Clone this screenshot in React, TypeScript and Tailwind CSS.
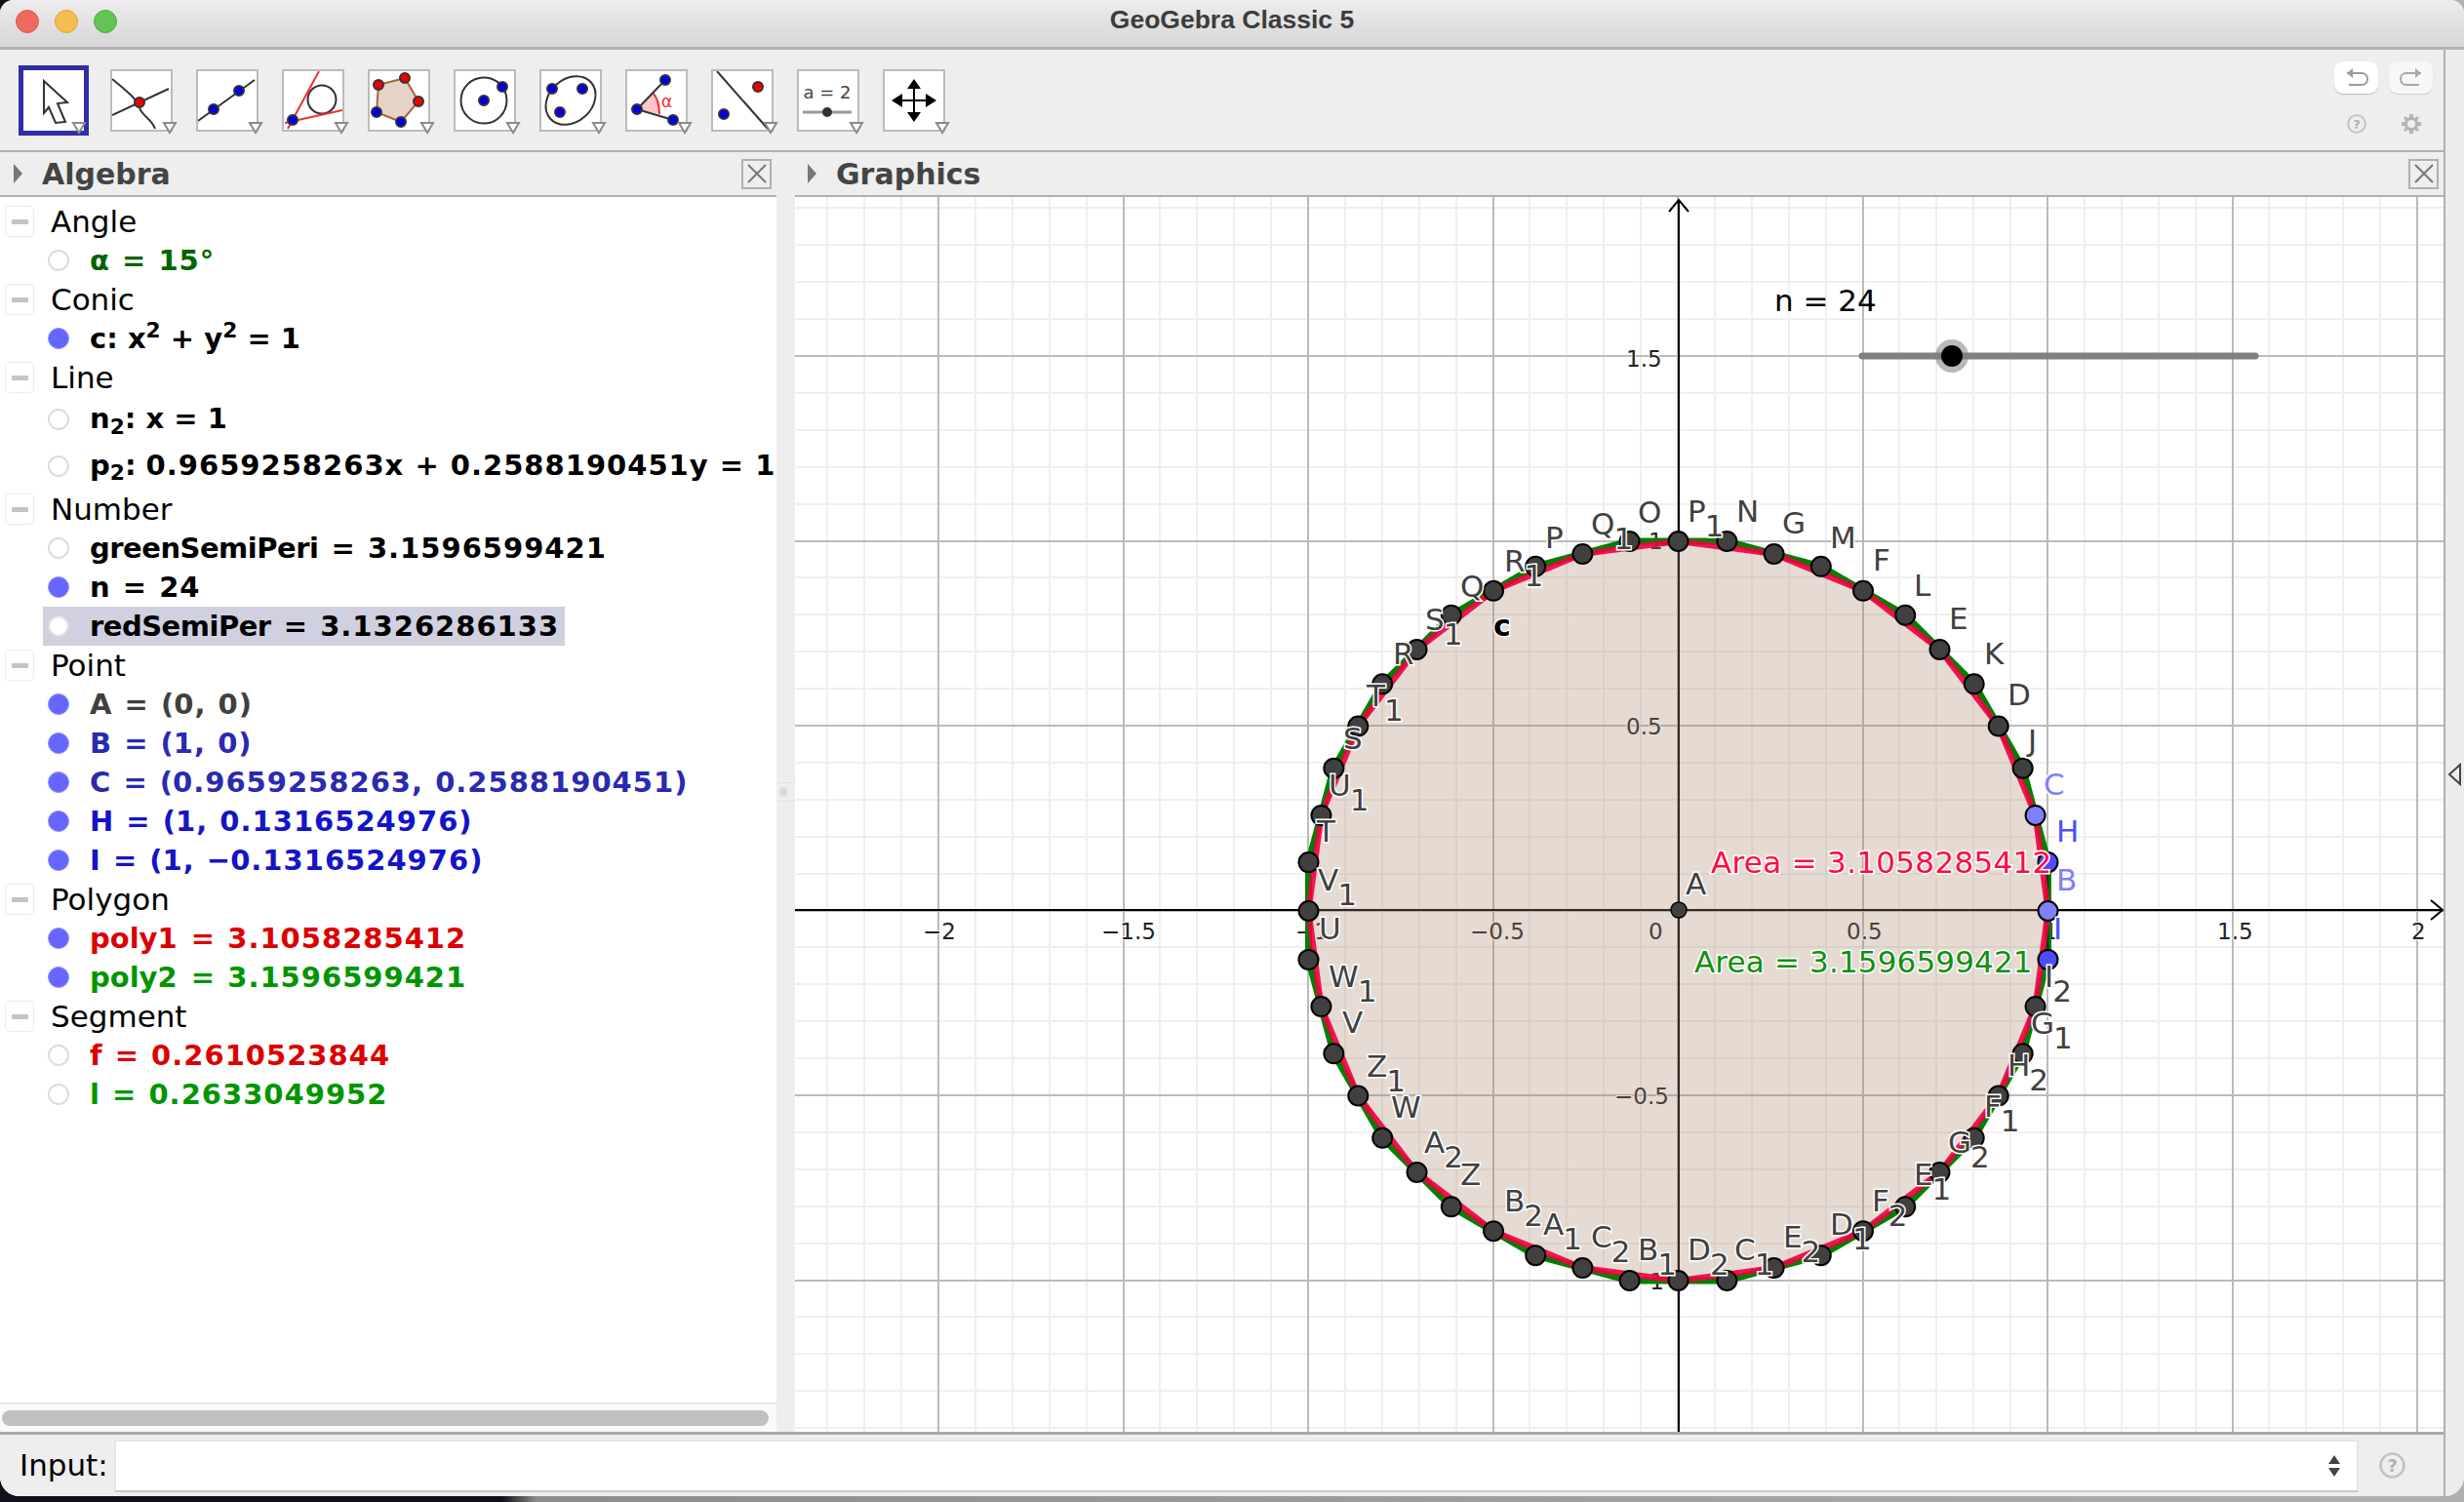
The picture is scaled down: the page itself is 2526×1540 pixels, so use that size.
import React from 'react';

const SANS = '"DejaVu Sans", sans-serif';
const OX = 1720.5;
const OY = 934;
const UNIT = 379;

const px = (x: number) => OX + x * UNIT;
const py = (y: number) => OY - y * UNIT;

const Dot = ({ x, y, c, r = 5 }: { x: number; y: number; c: string; r?: number }) => (
  <circle cx={x} cy={y} r={r} fill={c} stroke="#333" strokeWidth={2} />
);

const BLUE = '#0000e0';
const RED = '#f00000';

const icons: React.ReactNode[] = [
  <g fill="none" stroke="#333" strokeWidth={2}>
    <path d="M2 10 C16 22 28 30 31 42 C36 50 43 52 46 61" />
    <path d="M2 47 L60 20" />
    <Dot x={30} y={34} c={RED} />
  </g>,
  <g fill="none" stroke="#333" strokeWidth={2}>
    <path d="M2 53 L60 11" />
    <Dot x={18} y={41} c={BLUE} />
    <Dot x={44} y={22} c={BLUE} />
  </g>,
  <g fill="none" strokeWidth={2}>
    <circle cx={41} cy={31} r={14.5} stroke="#333" />
    <path d="M38 2 L6 61" stroke="#f03030" />
    <path d="M3 55 L62 42" stroke="#f03030" />
    <Dot x={11} y={52} c={BLUE} />
  </g>,
  <g strokeWidth={2}>
    <path d="M38 9 L11 16 L9 44 L34 54 L52 33 Z" fill="#e6d3c8" stroke="#a8643c" />
    <Dot x={38} y={9} c={RED} />
    <Dot x={11} y={16} c={RED} />
    <Dot x={52} y={33} c={RED} />
    <Dot x={9} y={44} c={BLUE} />
    <Dot x={34} y={54} c={BLUE} />
  </g>,
  <g fill="none" strokeWidth={2}>
    <circle cx={31} cy={32} r={23.5} stroke="#333" />
    <Dot x={31} y={32} c={BLUE} />
    <Dot x={50} y={18} c={BLUE} />
  </g>,
  <g fill="none" strokeWidth={2}>
    <ellipse cx={32} cy={32} rx={28} ry={22} transform="rotate(-42 32 32)" stroke="#333" />
    <Dot x={13} y={20} c={BLUE} />
    <Dot x={44} y={20} c={BLUE} />
    <Dot x={21} y={44} c={BLUE} />
  </g>,
  <g fill="none" strokeWidth={2}>
    <path d="M12 41 L28 24 C33 29 35 36 35 46 Z" fill="#ffc4c4" stroke="none" />
    <path d="M28 24 C33 29 35 36 35 46" stroke="#f03030" />
    <path d="M41 11 L12 41 L49 52" stroke="#333" />
    <Dot x={41} y={11} c={BLUE} />
    <Dot x={12} y={41} c={BLUE} />
    <Dot x={49} y={52} c={BLUE} />
    <text x={37} y={39} fontSize={17} fill="#f03030" stroke="none" fontFamily={SANS}>
      α
    </text>
  </g>,
  <g fill="none" strokeWidth={2}>
    <path d="M6 2 L58 61" stroke="#333" />
    <Dot x={48} y={18} c={RED} />
    <Dot x={13} y={46} c={BLUE} />
  </g>,
  <g>
    <text x={31} y={30} fontSize={18} textAnchor="middle" fill="#444" fontFamily={SANS}>
      a = 2
    </text>
    <path d="M6 44 H56" stroke="#999" strokeWidth={3} />
    <circle cx={31} cy={44} r={5} fill="#333" />
  </g>,
  <g fill="#000">
    <path d="M32 20 V44 M20 32 H44" stroke="#000" strokeWidth={2} />
    <path d="M32 10 L39 20 H25 Z M32 54 L39 44 H25 Z M9 32 L20 25 V39 Z M55 32 L44 25 V39 Z" />
  </g>,
];

const Caret = () => (
  <svg width={16} height={14} className="absolute right-[-7px] bottom-[-5px]">
    <path d="M2 2 H14 L8 12 Z" fill="#fff" stroke="#8a8a8a" strokeWidth={2} />
  </svg>
);

function Help({ size }: { size: number }) {
  return (
    <svg width={size} height={size} viewBox="0 0 26 26">
      <circle cx={13} cy={13} r={11.5} fill="none" stroke="#c2c2c2" strokeWidth={2.5} />
      <text x={13} y={19} textAnchor="middle" fontSize={17} fontWeight={700} fill="#b0b0b0" fontFamily={SANS}>
        ?
      </text>
    </svg>
  );
}

const Toolbar = () => (
  <div className="flex h-[105px] items-center pt-[1px] pl-[19px] pr-[11px] bg-[#eeeeee] border-b-[2px] border-[#b0b0b0]">
    <div className="relative w-[72px] h-[72px] border-[5px] border-[#2e2ea6] bg-white">
      <svg width={62} height={62} viewBox="5 5 62 62">
        <path
          d="M26 16 L50 38 L40 39 L48 58 L38 59 L31 43 L26 49 Z"
          fill="#fff"
          stroke="#333"
          strokeWidth={2}
        />
      </svg>
      <svg width={16} height={14} className="absolute right-[-3px] bottom-[-4px]">
        <path d="M2 2 H14 L8 12 Z" fill="#fff" stroke="#8a8a8a" strokeWidth={2} />
      </svg>
    </div>
    <div className="flex gap-[24px] ml-[22px]">
      {icons.map((icon, i) => (
        <div key={i} className="relative w-[64px] h-[64px] border-[2px] border-[#bbbbbb] bg-white">
          <svg width={60} height={60} viewBox="2 2 60 60">
            {icon}
          </svg>
          <Caret />
        </div>
      ))}
    </div>
    <div className="ml-auto flex flex-col gap-[21px] self-start mt-[11px]">
      <div className="flex gap-[11px]">
        <div className="w-[45px] h-[33px] rounded-[9px] bg-white shadow-[0_1px_1px_#bbb] flex items-center justify-center">
          <svg width={26} height={26} viewBox="0 0 26 26" fill="none" stroke="#9a9a9a" strokeWidth={2}>
            <path d="M3 8 H18 C26 8 26 20 18 20 H5" />
            <path d="M9 3 L3 8 L9 13" fill="#9a9a9a" stroke="none" />
          </svg>
        </div>
        <div className="w-[45px] h-[33px] rounded-[9px] bg-[#f7f7f7] shadow-[0_1px_1px_#ccc] flex items-center justify-center">
          <svg width={26} height={26} viewBox="0 0 26 26" fill="none" stroke="#a8a8a8" strokeWidth={2}>
            <path d="M23 8 H8 C0 8 0 20 8 20 H21" />
            <path d="M17 3 L23 8 L17 13" fill="#a8a8a8" stroke="none" />
          </svg>
        </div>
      </div>
      <div className="flex gap-[36px] pl-[13px]">
        <Help size={20} />
        <svg width={20} height={20} viewBox="0 0 20 20">
          <path
            d="M8 0 H12 V3 L14 4 L16 2 L18 4 L16 6 L17 8 H20 V12 H17 L16 14 L18 16 L16 18 L14 16 L12 17 V20 H8 V17 L6 16 L4 18 L2 16 L4 14 L3 12 H0 V8 H3 L4 6 L2 4 L4 2 L6 4 L8 3 Z"
            fill="#b4b4b4"
          />
          <circle cx={10} cy={10} r={4} fill="#eee" />
        </svg>
      </div>
    </div>
  </div>
);

const PanelHeader = ({ title }: { title: string }) => (
  <div className="flex items-center h-[46px] bg-[#eeeeee] border-b-[2px] border-[#b0b0b0]">
    <svg width={12} height={20} className={title === 'Algebra' ? 'ml-[13px]' : 'ml-[12px]'}>
      <path d="M1 0 L10 10 L1 20 Z" fill="#777" />
    </svg>
    <span className="ml-[18px] text-[30px] font-bold text-[#444] [font-family:'DejaVu_Sans',sans-serif]">
      {title}
    </span>
    <div className="ml-auto mr-[5px] w-[31px] h-[31px] border-[2px] border-[#b0b0b0] flex items-center justify-center">
      <svg width={22} height={22} viewBox="0 0 22 22">
        <path d="M2 2 L20 20 M20 2 L2 20" stroke="#777" strokeWidth={2} />
      </svg>
    </div>
  </div>
);

const Group = ({ label }: { label: string }) => (
  <div className="flex items-center h-[40px]">
    <div className="ml-[5px] w-[30px] h-[32px] rounded-[4px] border-[1.5px] border-[#ececec] flex items-center justify-center">
      <div className="w-[17px] h-[5px] bg-[#c4c4c4]" />
    </div>
    <span className="ml-[17px] text-[31px] text-black">{label}</span>
  </div>
);

// digits run wider and long words narrower than in the bold face we have
const fmt = (s: string) =>
  s.split(/(\d[\d.]*|[A-Za-z]{5,})/).map((part, i) => {
    if (/^\d/.test(part)) {
      return (
        <span key={i} className="tracking-[1px]">
          {part}
        </span>
      );
    }
    if (/^[A-Za-z]{5,}$/.test(part)) {
      return (
        <span key={i} className="tracking-[-0.5px]">
          {part}
        </span>
      );
    }
    return part;
  });

const Item = ({
  on,
  color,
  hi,
  h,
  children,
}: {
  on?: boolean;
  color: string;
  hi?: boolean;
  h?: string;
  children: React.ReactNode;
}) => (
  <div className={`flex items-center ${h || 'h-[40px]'} ml-[44px]`}>
    <div className={`flex items-center h-[40px] pr-[6px] ${hi ? 'bg-[#d0d0e0]' : ''}`}>
      <div
        className={`ml-[5px] w-[22px] h-[22px] rounded-full ${
          on ? 'bg-[#6666ff] border-[1px] border-[#8f8fff]' : 'bg-white border-[2px] border-[#dddddd]'
        }`}
      />
      <span className={`ml-[21px] text-[29px] font-bold whitespace-nowrap ${h ? '' : 'pt-[1px]'} ${color}`}>
        {children}
      </span>
    </div>
  </div>
);

const Wide = ({ children }: { children: React.ReactNode }) => (
  <span className="[word-spacing:3px]">{children}</span>
);

const Algebra = () => (
  <div className="flex-1 min-h-0 bg-white pt-[5px] overflow-hidden [font-family:'DejaVu_Sans',sans-serif]">
    <Group label="Angle" />
    <Item color="text-[#006400]">
      <Wide>{fmt('α = 15°')}</Wide>
    </Item>
    <Group label="Conic" />
    <Item on color="text-black">
      c: x<sup>2</sup> + y<sup>2</sup> = 1
    </Item>
    <Group label="Line" />
    <Item color="text-black" h="h-[46px]">
      n<sub>2</sub>: x = 1
    </Item>
    <Item color="text-black" h="h-[49px]">
      p<sub>2</sub>: <span className="[word-spacing:2px]">{fmt('0.9659258263x + 0.2588190451y = 1')}</span>
    </Item>
    <Group label="Number" />
    <Item color="text-black">
      <Wide>{fmt('greenSemiPeri = 3.1596599421')}</Wide>
    </Item>
    <Item on color="text-black">
      <Wide>{fmt('n = 24')}</Wide>
    </Item>
    <Item hi color="text-black">
      <Wide>{fmt('redSemiPer = 3.1326286133')}</Wide>
    </Item>
    <Group label="Point" />
    <Item on color="text-[#404040]">
      <Wide>{fmt('A = (0, 0)')}</Wide>
    </Item>
    <Item on color="text-[#2a2ab0]">
      <Wide>{fmt('B = (1, 0)')}</Wide>
    </Item>
    <Item on color="text-[#2a2ab0]">
      <Wide>{fmt('C = (0.9659258263, 0.2588190451)')}</Wide>
    </Item>
    <Item on color="text-[#1414c8]">
      <Wide>{fmt('H = (1, 0.1316524976)')}</Wide>
    </Item>
    <Item on color="text-[#1414c8]">
      <Wide>{fmt('I = (1, −0.1316524976)')}</Wide>
    </Item>
    <Group label="Polygon" />
    <Item on color="text-[#dc0000]">
      <Wide>{fmt('poly1 = 3.1058285412')}</Wide>
    </Item>
    <Item on color="text-[#009600]">
      <Wide>{fmt('poly2 = 3.1596599421')}</Wide>
    </Item>
    <Group label="Segment" />
    <Item color="text-[#dc0000]">
      <Wide>{fmt('f = 0.2610523844')}</Wide>
    </Item>
    <Item color="text-[#009600]">
      <Wide>{fmt('l = 0.2633049952')}</Wide>
    </Item>
  </div>
);

type Lbl = [string, string, number, number, string?];

// name, subscript, left x, baseline, colour
const labels: Lbl[] = [
  ['O', '', 1679, 536],
  ['P', '1', 1730, 535],
  ['Q', '1', 1631, 548],
  ['P', '', 1584, 562],
  ['R', '1', 1542, 586],
  ['Q', '', 1497, 612],
  ['S', '1', 1461, 646],
  ['R', '', 1428, 681],
  ['T', '1', 1401, 724],
  ['S', '', 1377, 768],
  ['U', '1', 1362, 816],
  ['T', '', 1350, 863],
  ['V', '1', 1351, 913],
  ['U', '', 1352, 963],
  ['W', '1', 1362, 1012],
  ['V', '', 1376, 1059],
  ['Z', '1', 1401, 1104],
  ['W', '', 1426, 1146],
  ['A', '2', 1460, 1182],
  ['Z', '', 1497, 1215],
  ['B', '2', 1542, 1242],
  ['A', '1', 1582, 1266],
  ['C', '2', 1631, 1279],
  ['B', '1', 1679, 1292],
  ['D', '2', 1730, 1292],
  ['C', '1', 1778, 1292],
  ['E', '2', 1828, 1279],
  ['D', '1', 1876, 1266],
  ['F', '2', 1919, 1242],
  ['E', '1', 1962, 1215],
  ['G', '2', 1997, 1182],
  ['F', '1', 2034, 1145],
  ['H', '2', 2058, 1103],
  ['G', '1', 2082, 1060],
  ['I', '2', 2096, 1012],
  ['I', '', 2105, 963, '#4d4dff'],
  ['B', '', 2108, 913, '#8080ff'],
  ['H', '', 2108, 863, '#4d4dff'],
  ['C', '', 2095, 815, '#8080ff'],
  ['J', '', 2079, 770],
  ['D', '', 2058, 723],
  ['K', '', 2034, 681],
  ['E', '', 1998, 645],
  ['L', '', 1962, 611],
  ['F', '', 1920, 585],
  ['M', '', 1876, 562],
  ['G', '', 1827, 547],
  ['N', '', 1780, 535],
  ['A', '', 1728, 917],
];

const ticks: [string, number, number][] = [
  ['−2', 946, 963],
  ['−1.5', 1129, 963],
  ['−1', 1328, 963],
  ['−0.5', 1507, 963],
  ['0', 1690, 963],
  ['0.5', 1893, 963],
  ['1', 2095, 963],
  ['1.5', 2273, 963],
  ['2', 2472, 963],
  ['1.5', 1667, 376],
  ['1', 1690, 563],
  ['0.5', 1667, 753],
  ['−0.5', 1655, 1132],
  ['−1', 1672, 1322],
];

const halo = { stroke: '#fff', strokeWidth: 3, paintOrder: 'stroke' as const };

const Graphics = () => {
  const minorX: number[] = [];
  const majorX: number[] = [];
  for (let k = -24; k <= 21; k++) {
    const x = Math.floor(OX + k * 37.9);
    if (k % 5 === 0) majorX.push(x);
    else minorX.push(x);
  }
  const minorY: number[] = [];
  const majorY: number[] = [];
  for (let k = -14; k <= 19; k++) {
    const y = Math.floor(OY - k * 37.9);
    if (k % 5 === 0) majorY.push(y);
    else minorY.push(y);
  }

  const inner: [number, number][] = [];
  const outer: [number, number][] = [];
  for (let k = 0; k < 24; k++) {
    const a = (k * 15 * Math.PI) / 180;
    inner.push([px(Math.cos(a)), py(Math.sin(a))]);
    const b = ((k * 15 + 7.5) * Math.PI) / 180;
    const r = 1 / Math.cos((7.5 * Math.PI) / 180);
    outer.push([px(r * Math.cos(b)), py(r * Math.sin(b))]);
  }
  const toPts = (p: [number, number][]) => p.map((q) => q.join(',')).join(' ');

  return (
    <svg
      width={1690}
      height={1266}
      viewBox="815 202 1690 1266"
      className="block bg-white"
      fontFamily={SANS}
    >
      {minorX.map((x) => (
        <line key={x} x1={x} x2={x} y1={202} y2={1468} stroke="#efefef" strokeWidth={2} />
      ))}
      {minorY.map((y) => (
        <line key={y} y1={y} y2={y} x1={815} x2={2505} stroke="#efefef" strokeWidth={2} />
      ))}
      {majorX.map((x) => (
        <line key={x} x1={x} x2={x} y1={202} y2={1468} stroke="#bbbbbb" strokeWidth={2} />
      ))}
      {majorY.map((y) => (
        <line key={y} y1={y} y2={y} x1={815} x2={2505} stroke="#bbbbbb" strokeWidth={2} />
      ))}
      <line x1={815} x2={2503} y1={933} y2={933} stroke="#000" strokeWidth={2} />
      <line x1={1721} x2={1721} y1={206} y2={1468} stroke="#000" strokeWidth={2} />
      <path d="M2492 923 L2504 933 L2492 943 M1711 217 L1721 205 L1731 217" fill="none" stroke="#000" strokeWidth={2} />

      {ticks.map(([t, x, y], i) => (
        <text key={i} x={x} y={y} fontSize={23} fill="#222" {...halo} strokeWidth={2}>
          {t}
        </text>
      ))}

      <polygon points={toPts(outer)} fill="#a8876c" fillOpacity={0.3} stroke="#008000" strokeWidth={7} strokeLinejoin="round" />
      <line x1={2099} x2={2099} y1={883} y2={983} stroke="#111" strokeWidth={3} opacity={0.6} />
      <polygon points={toPts(inner)} fill="none" stroke="#f00040" strokeWidth={6} strokeOpacity={0.9} strokeLinejoin="round" />

      {outer.map(([x, y], k) => {
        const special = k === 0 || k === 23;
        return (
          <circle key={`o${k}`} cx={x} cy={y} r={10} fill={special ? '#4d4dff' : '#404040'} stroke="#000" strokeWidth={2} />
        );
      })}
      {inner.map(([x, y], k) => {
        const special = k === 0 || k === 1;
        return (
          <circle key={`i${k}`} cx={x} cy={y} r={10} fill={special ? '#8080ff' : '#404040'} stroke="#000" strokeWidth={2} />
        );
      })}
      <circle cx={1721} cy={933} r={8} fill="#404040" stroke="#000" strokeWidth={1.5} />

      {labels.map(([n, s, x, y, c], i) => (
        <text key={i} x={x} y={y} fontSize={31} fill={c || '#404040'} {...halo}>
          {n}
          {s && (
            <tspan dx={-1} dy={15}>
              {s}
            </tspan>
          )}
        </text>
      ))}
      <text x={1531} y={652} fontSize={30} fontWeight={700} fill="#000" {...halo}>
        c
      </text>

      <text x={1754} y={895} fontSize={31} letterSpacing={0.3} fill="#ff0a44" {...halo}>
        Area = 3.1058285412
      </text>
      <text x={1737} y={997} fontSize={31} letterSpacing={0.15} fill="#128f12" {...halo}>
        Area = 3.1596599421
      </text>

      <text x={1819} y={319} fontSize={31} fill="#000">
        n = 24
      </text>
      <line x1={1909} x2={2312} y1={365} y2={365} stroke="#808080" strokeWidth={7} strokeLinecap="round" />
      <circle cx={2001} cy={365} r={17} fill="#808080" fillOpacity={0.55} />
      <circle cx={2001} cy={365} r={11} fill="#000" />
    </svg>
  );
};

export default function App() {
  return (
    <div className="w-[2526px] h-[1540px] overflow-hidden bg-[linear-gradient(90deg,#10101a_0,#10101a_515px,#8c8c8c_550px,#b0b0b0_100%)]">
      <div className="h-[1534px] flex flex-col rounded-t-[14px] rounded-b-[20px] overflow-hidden bg-[#eeeeee]">
        <div className="relative h-[51px] pb-[6px] flex items-center justify-center bg-gradient-to-b from-[#ededed] to-[#d6d6d6] border-b-[3px] border-[#b4b4b4]">
          <div className="absolute left-[16px] top-[10px] flex gap-[16px]">
            <div className="w-[24px] h-[24px] rounded-full bg-[#ee6a5f] border border-[#d8584e]" />
            <div className="w-[24px] h-[24px] rounded-full bg-[#f5bd4f] border border-[#dba33c]" />
            <div className="w-[24px] h-[24px] rounded-full bg-[#61c454] border border-[#50a944]" />
          </div>
          <span className="text-[26.5px] font-bold text-[#3c3c3c] [font-family:'Liberation_Sans',sans-serif]">
            GeoGebra Classic 5
          </span>
        </div>
        <div className="flex-1 min-h-0 flex">
          <div className="flex-1 min-w-0 flex flex-col">
            <Toolbar />
            <div className="flex-1 min-h-0 flex">
              <div className="w-[796px] flex flex-col">
                <PanelHeader title="Algebra" />
                <Algebra />
                <div className="h-[30px] bg-[#fafafa] border-t-[2px] border-[#e8e8e8] px-[2px] pt-[6px]">
                  <div className="w-[786px] h-[16px] rounded-[8px] bg-[#c0c0c0]" />
                </div>
              </div>
              <div className="w-[19px] relative bg-[#eeeeee]">
                <div className="absolute left-0 top-[646px] h-[20px] w-full border-y border-[#e2e2e2]">
                  <div className="ml-[3px] mt-[4px] w-[8px] h-[10px] rounded-full bg-[#dcdcdc]" />
                </div>
              </div>
              <div className="flex-1 min-w-0 flex flex-col">
                <PanelHeader title="Graphics" />
                <Graphics />
              </div>
            </div>
            <div className="h-[66px] flex items-center bg-[#eeeeee] border-t-[3px] border-[#a8a8a8]">
              <span className="ml-[20px] w-[97px] text-[31px] text-black [font-family:'DejaVu_Sans',sans-serif]">
                Input:
              </span>
              <div className="w-[2301px] h-[54px] bg-white border-[2px] border-[#e6e6e6] border-b-[#c8c8c8] flex items-center justify-end pr-[16px]">
                <svg width={14} height={24} viewBox="0 0 14 24">
                  <path d="M7 1 L13 10 H1 Z M7 23 L13 14 H1 Z" fill="#444" />
                </svg>
              </div>
              <div className="ml-[21px]">
                <Help size={27} />
              </div>
            </div>
          </div>
          <div className="w-[21px] bg-[#ececec] border-l-[2px] border-[#b0b0b0] pt-[731px] pl-[2px]">
            <svg width={16} height={24} viewBox="0 0 16 24">
              <path d="M13 2 L2 12 L13 22 Z" fill="none" stroke="#444" strokeWidth={2} />
            </svg>
          </div>
        </div>
      </div>
    </div>
  );
}
